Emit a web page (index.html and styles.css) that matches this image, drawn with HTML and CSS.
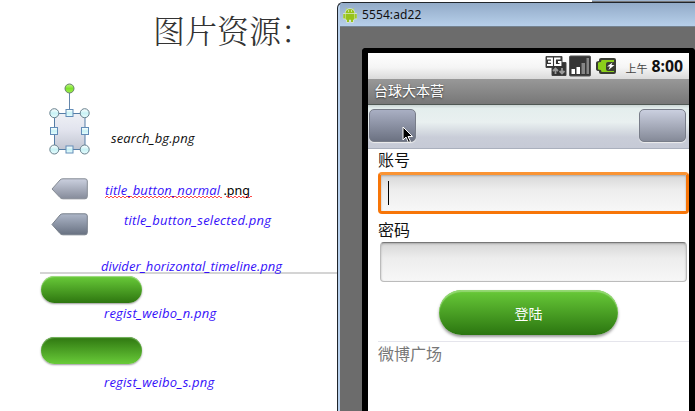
FILE: index.html
```html
<!DOCTYPE html>
<html lang="zh-CN">
<head>
<meta charset="utf-8">
<title>图片资源</title>
<link rel="stylesheet" href="styles.css">
</head>
<body>
<div class="page">
  <main class="slide">
    <h1>图片资源：</h1>
    <section class="row search">
      <svg class="selection" width="42" height="74" viewBox="0 0 42 74">
        <defs>
          <linearGradient id="pane" x2="0" y2="1"><stop stop-color="#eef0f5"/><stop offset=".45" stop-color="#e2e4ee"/><stop offset="1" stop-color="#c1c5d1"/></linearGradient>
          <linearGradient id="knob" x2="0" y2="1"><stop stop-color="#fff"/><stop offset=".5" stop-color="#c8f2f5"/><stop offset="1" stop-color="#e8fcfd"/></linearGradient>
          <linearGradient id="spin" x2="0" y2="1"><stop stop-color="#c4f58a"/><stop offset=".5" stop-color="#7ce42c"/><stop offset="1" stop-color="#a0ec50"/></linearGradient>
        </defs>
        <path d="M21.500 10v20" stroke="#6587ab"/>
        <rect x="6.500" y="31.500" width="30.500" height="36" fill="url(#pane)" stroke="#557da6"/>
        <circle cx="21.500" cy="6.500" r="4.500" fill="url(#spin)" stroke="#66806a"/>
        <g fill="url(#knob)" stroke="#68818e">
          <circle cx="6.300" cy="31.200" r="4.500"/><circle cx="36.700" cy="31.200" r="4.500"/><circle cx="6.300" cy="67.500" r="4.500"/><circle cx="36.700" cy="67.500" r="4.500"/>
        </g>
        <g fill="url(#knob)" stroke="#638db8">
          <rect x="18" y="27.500" width="7" height="7"/><rect x="18" y="64" width="7" height="7"/><rect x="2.500" y="45.500" width="7" height="7"/><rect x="33.500" y="45.500" width="7" height="7"/>
        </g>
      </svg>
      <span class="label dark">search_bg.png</span>
    </section>
    <section class="row tag-normal">
      <svg width="37" height="22" viewBox="0 0 37 22"><defs><linearGradient id="t1" x2="0" y2="1"><stop stop-color="#cbd0df"/><stop offset="1" stop-color="#858b9a"/></linearGradient></defs><path d="M1 11L9 2Q10 .8 12 .8H34Q36.300 .8 36.300 3V18.500Q36.300 20.800 34 20.800H12Q10 20.800 9 19.500Z" fill="url(#t1)" stroke="#858b94"/></svg>
      <span class="typo"><span class="label">title_button_normal</span><span class="ext"> .png</span>
        <svg class="squiggle" width="147" height="4"><defs><pattern id="wave" width="4" height="4" patternUnits="userSpaceOnUse"><path d="M0 3L2 1L4 3" fill="none" stroke="#ff4c4c"/></pattern></defs><rect width="117" height="4" fill="url(#wave)"/><rect x="121" width="26" height="4" fill="url(#wave)"/></svg>
      </span>
    </section>
    <section class="row tag-selected">
      <svg width="37" height="23" viewBox="0 0 37 23"><defs><linearGradient id="t2" x2="0" y2="1"><stop stop-color="#adb6c8"/><stop offset="1" stop-color="#687181"/></linearGradient></defs><path d="M1 11.500L9 2Q10 .8 12 .8H34Q36.300 .8 36.300 3V19.500Q36.300 21.800 34 21.800H12Q10 21.800 9 20.500Z" fill="url(#t2)" stroke="#777f8a"/></svg>
      <span class="label">title_button_selected.png</span>
    </section>
    <section class="divider-row"><span class="label">divider_horizontal_timeline.png</span></section>
    <div class="pill"></div>
    <p class="caption"><span class="label weibo-n">regist_weibo_n.png</span></p>
    <div class="pill pressed"></div>
    <p class="caption"><span class="label weibo-s">regist_weibo_s.png</span></p>
  </main>

  <aside class="window-area">
    <div class="behind"></div>
    <div class="window">
      <header class="titlebar">
        <svg width="14" height="16" viewBox="0 0 14 16"><path d="M4 3L3 1M10 3l1-2" stroke="#b4d860"/><path d="M2.500 6a4.500 4 0 0 1 9 0ZM2.500 6.700h9v5q0 1-1 1h-7q-1 0-1-1ZM.3 7h1.600v4.500H.3ZM12.100 7h1.600v4.500h-1.600ZM4 12h2v3H4ZM8 12h2v3H8Z" fill="none" stroke="#dce9ce" stroke-width="1.400"/><path d="M2.500 6a4.500 4 0 0 1 9 0ZM2.500 6.700h9v5q0 1-1 1h-7q-1 0-1-1ZM.3 7h1.600v4.500H.3ZM12.100 7h1.600v4.500h-1.600ZM4 12h2v3H4ZM8 12h2v3H8Z" fill="#97c31b"/><path d="M5 4h1M8 4h1" stroke="#fff"/></svg>
        <span>5554:ad22</span>
      </header>
      <div class="phone">
        <div class="screen">
          <div class="status">
            <svg width="72" height="22" viewBox="0 0 72 22">
              <path d="M1 1.500h16v6h4v13H7v-8H1Z" fill="#333" stroke="#444" stroke-linejoin="round"/>
              <path d="M2 3.500h5v6.500H2M3 6.700h4M15.500 3.500H10V10h5.500V7H13" fill="none" stroke="#fff" stroke-width="1.900"/>
              <path d="M10.500 19v-5M8 16l2.500-2.500L13 16M17 13v5M14.500 16l2.500 2.500 2.500-2.500" fill="none" stroke="#999" stroke-width="1.800"/>
              <rect x="24.500" y="1" width="21" height="20" rx="1" fill="#353535" stroke="#555"/>
              <path d="M26.500 14h3.500v5h-3.500ZM31.500 12H35v7h-3.500Z" fill="#fff"/><path d="M36.500 8H40v11h-3.500ZM41.500 3H44v16h-2.500Z" fill="#858585"/>
              <path d="M56 3h13q2 0 2 2v12q0 2-2 2H56q-2 0-2-2v-1q-3 0-3-2V8q0-2 3-2V5q0-2 2-2Z" fill="#393c32"/>
              <path d="M57 5h12v2h-6q-2 0-2 2v5q0 2 2 2h6v1H57q-1 0-1-2-3 0-3-1V8q0-1 3-1 0-2 1-2Z" fill="#8bcf1b"/>
              <path d="M67.500 7.500l-5.500 4h3l-1.500 3.500 6-5h-3Z" fill="#fff"/>
            </svg>
            <span class="ampm">上午</span><b>8:00</b>
          </div>
          <div class="app-title">台球大本营</div>
          <nav class="toolbar">
            <div class="tool selected"></div><div class="tool"></div>
            <svg class="cursor" width="12" height="18" viewBox="0 0 12 18"><path d="M1 1v13l3-3 2.500 5.500 2-1L6 10.500h4.500Z" stroke="#fff"/></svg>
          </nav>
          <form class="form">
            <label class="name">账号</label>
            <div class="field focused"><i></i></div>
            <label class="password">密码</label>
            <div class="field"></div>
            <button type="button">登陆</button>
          </form>
          <div class="plaza">微博广场</div>
        </div>
      </div>
    </div>
  </aside>
</div>
</body>
</html>
```
FILE: styles.css
```css
* { box-sizing: border-box; }
body { margin: 0; background: #fff; font-family: "Noto Sans", "Noto Sans CJK SC", sans-serif; }
.page { display: grid; grid-template-columns: 337px 358px; width: 695px; height: 411px; overflow: hidden; }
.slide { height: 411px; min-width: 0; }
h1 { margin: 0; height: 82px; padding: 9px 0 0 153px; font: 300 32px/40px "Noto Serif CJK SC", "Noto Sans CJK SC", serif; color: #333; white-space: nowrap; }
.row { display: flex; white-space: nowrap; }
.row svg { flex: none; }
.label { display: inline-block; font: italic 13px/18px "Open Sans", "Noto Sans", sans-serif; letter-spacing: .24px; color: #3510fa; white-space: nowrap; }
.label.dark { color: #111; letter-spacing: .1px; }
.search { height: 95px; padding-left: 48px; }
.search .label { margin: 47px 0 0 21px; }
.tag-normal { height: 36px; padding-left: 51px; }
.tag-normal > svg { margin-top: 1px; }
.tag-normal .label { letter-spacing: .16px; }
.typo { position: relative; height: 20px; margin: 1px 0 0 17px; }
.ext { font: 12.5px/18px "Noto Sans", sans-serif; white-space: pre; }
.squiggle { position: absolute; left: 0; top: 17px; }
.tag-selected { height: 59px; padding-left: 51px; }
.tag-selected .label { margin: -2px 0 0 36px; }
.divider-row { height: 2px; margin-left: 40px; background: #d4d4d4; }
.divider-row .label { margin-left: 61px; letter-spacing: .07px; transform: translateY(-18px); }
.pill { width: 101px; height: 27px; margin: 2px 0 0 41px; border-radius: 14px; background: linear-gradient(#69cb39, #2e7610); box-shadow: inset 0 1px 1px #a3dd87, 0 1px 2px #999; }
.pressed { margin-top: 14px; background: linear-gradient(#2e7610, #69cb39); box-shadow: inset 0 1px 1px #79b663, 0 1px 2px #999; }
.caption { height: 20px; margin: 0 0 0 104px; line-height: 18px; }
.weibo-n { padding-top: 1px; }
.weibo-s { padding-top: 9px; }
.window-area { height: 411px; }
.behind { height: 2px; margin-left: 255px; background: #9eb4cf; border-bottom: 1px solid #777; }
.window { height: 409px; border: solid #20252b; border-width: 1px 0 0 1px; border-radius: 6px 0 0 0; background: #b9d1ec; overflow: hidden; padding-left: 2px; }
.titlebar { height: 24px; padding: 2px 0 2px 3px; display: flex; align-items: center; gap: 5px; background: linear-gradient(#92abc8, #b7cfea); border-bottom: 1px solid #758391; font: 12px/16px "Noto Sans", sans-serif; letter-spacing: .1px; color: #111; }
.phone { height: 384px; padding: 21px 0 0 22px; background: #6c6c6c; }
.screen { height: 364px; border: 6px solid #000; border-width: 5px 6px 0; border-radius: 4px 4px 0 0; background: #fff; }
.status { height: 26px; display: flex; align-items: center; justify-content: flex-end; padding-right: 6px; background: linear-gradient(#fff, #f5f5f5 55%, #dadada); white-space: nowrap; }
.ampm { margin: 4px 4px 0 8px; font: 11px/16px "Noto Sans CJK SC", sans-serif; color: #444; }
.status b { font: 700 15.8px/20px "Noto Sans", sans-serif; color: #111; }
.app-title { height: 26px; padding: 0 6px; background: linear-gradient(#989898, #777); border-bottom: 1px solid #505854; color: #fff; font: 14px/23px "Noto Sans CJK SC", sans-serif; text-shadow: 0 1px 2px #333; }
.toolbar { position: relative; height: 44px; padding: 4px 3px 0 1px; display: flex; justify-content: space-between; background: linear-gradient(#cbd5d4, #e4eeed 8%, #e9f0f0 40%, #c9cdd8 75%, #c6cad6); border-bottom: 1px solid #aab0bd; }
.tool { width: 47px; height: 33px; border: 1px solid #787d89; border-radius: 5px; background: linear-gradient(#cacfdf, #858a98); box-shadow: 0 1px 1px #eee; }
.tool.selected { background: linear-gradient(#a9afc3, #6c7282); }
.cursor { position: absolute; left: 34px; top: 21px; }
.form { height: 192px; margin: 0; padding-left: 10px; display: flex; flex-direction: column; }
.form label { height: 23px; flex: none; font: 16px/20px "Noto Sans CJK SC", sans-serif; color: #111; }
.form .password { height: 28px; padding-top: 5px; }
.field { flex: none; width: 307px; height: 40px; margin-left: 2px; border: 1px solid #bbb; border-top: 1px solid #777; border-radius: 4px; background: linear-gradient(#d7d7d7, #ededed 40%, #f7f7f7); box-shadow: inset 0 1px 2px #aaa; }
.field.focused { width: 311px; height: 42px; margin-left: 0; border: 3px solid #f77508; border-top-color: #fa9434; padding: 6px 7px; }
.field i { display: block; width: 1px; height: 24px; background: #000; }
.form button { width: 179px; height: 45px; flex: none; margin: 8px 0 0 61px; padding: 1px 0 0; border: 0; border-radius: 23px; background: linear-gradient(#69cb39, #2b7510); box-shadow: inset 0 2px 1px #94d873, 0 2px 3px #999; color: #fff; font: 14px/20px "Noto Sans CJK SC", sans-serif; }
.plaza { margin-left: 10px; border-top: 1px solid #e5e5ec; font: 16px/23px "Noto Sans CJK SC", sans-serif; color: #777; }
```
